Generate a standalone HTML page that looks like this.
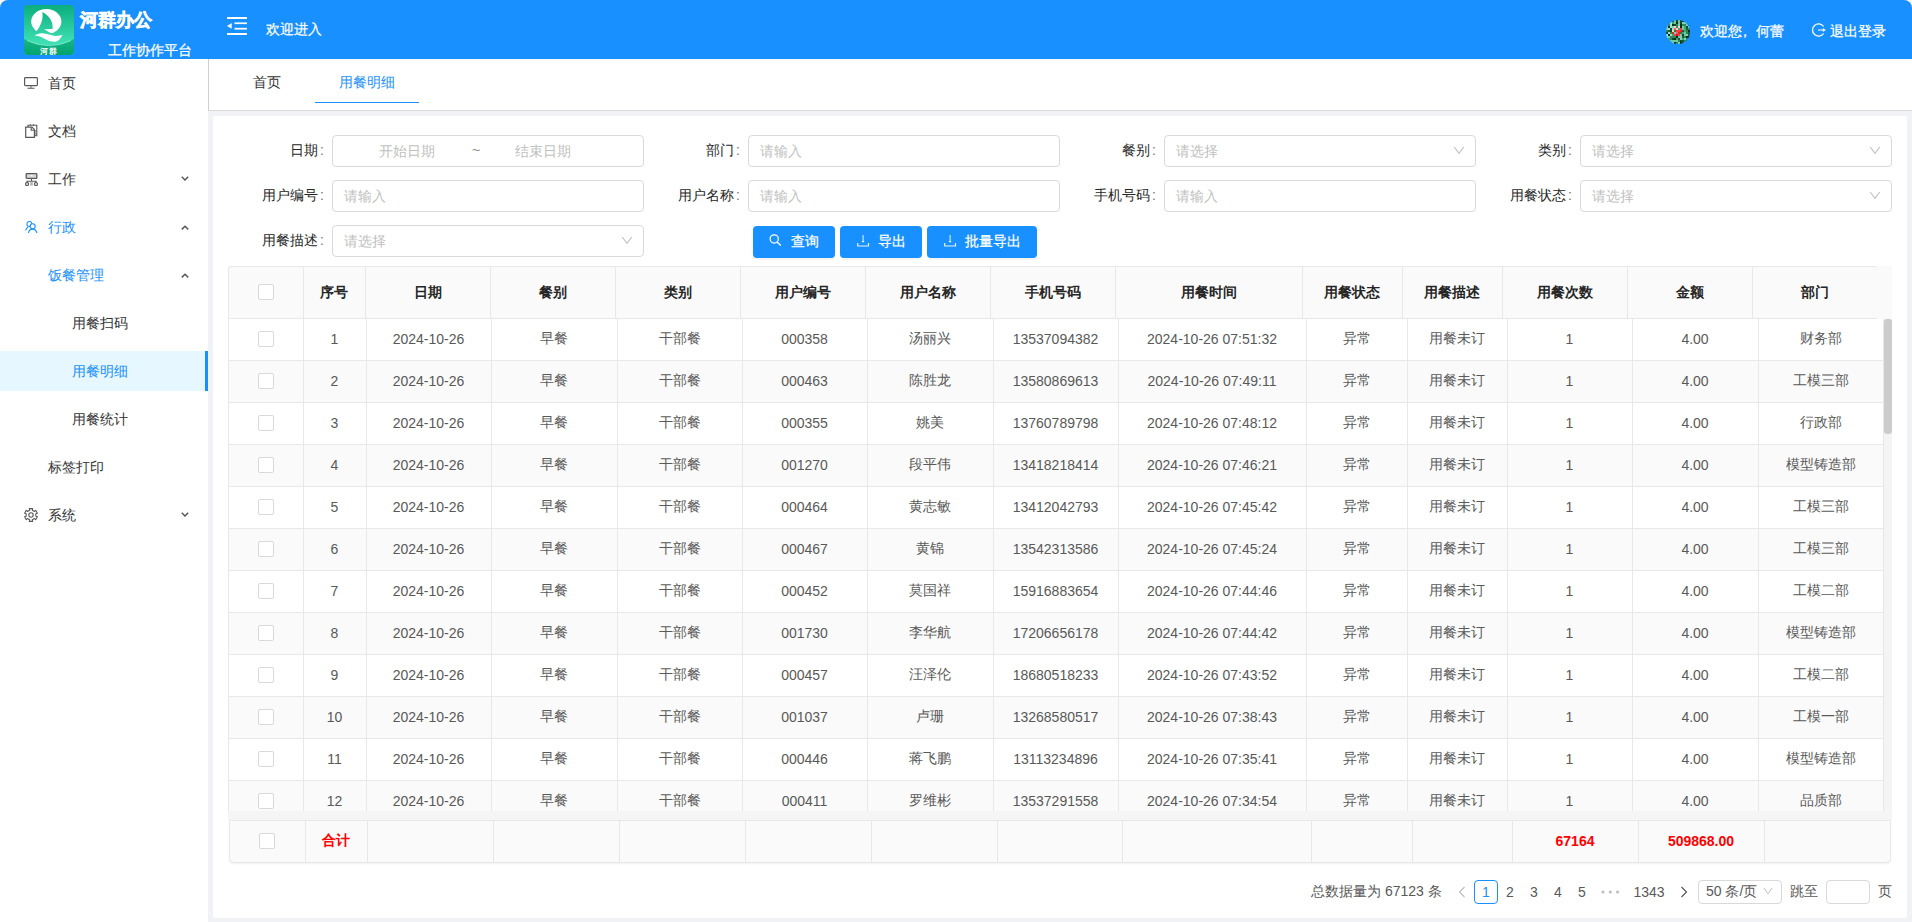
<!DOCTYPE html><html><head><meta charset="utf-8"><title>用餐明细</title><style>
html,body{margin:0;padding:0;width:1912px;height:922px;overflow:hidden;background:#fbf6ef;}
body{font-family:"Liberation Sans", sans-serif;font-size:14px;position:relative;color:#595959;}
div{box-sizing:border-box;}
svg{display:block;}
</style></head><body>
<div style="position:absolute;left:0px;top:20px;width:208px;height:902px;background:#fff;"></div>
<div style="position:absolute;left:208px;top:58px;width:1704px;height:864px;background:#f0f2f5;"></div>
<div style="position:absolute;left:0px;top:0px;width:1912px;height:59px;background:#1890ff;border-radius:8px 8px 0 0;"></div>
<svg style="position:absolute;left:24px;top:5px;" width="50" height="50" viewBox="0 0 50 50">
<defs><linearGradient id="lg" gradientUnits="userSpaceOnUse" x1="0" y1="0" x2="0" y2="38">
<stop offset="0" stop-color="#0aad7c"/><stop offset="1" stop-color="#3fe0b4"/></linearGradient>
<linearGradient id="lg2" x1="0" y1="0" x2="0" y2="1"><stop offset="0" stop-color="#16b887"/><stop offset="1" stop-color="#03a26f"/></linearGradient></defs>
<rect x="0" y="0" width="50" height="50" rx="4" fill="url(#lg)"/>
<path d="M0 34 Q25 47 50 34 V46 A4 4 0 0 1 46 50 H4 A4 4 0 0 1 0 46 Z" fill="url(#lg2)"/>
<path d="M3 35.5 Q25 46 47 35.5" stroke="#bff5e2" stroke-width="0.7" fill="none" opacity="0.8"/>
<ellipse cx="22.3" cy="16.6" rx="15.1" ry="12.5" fill="#fff"/>
<path d="M18.4 7 C24 10 29.5 16 28.6 23.9 L20.1 24.3 C23 26 26 28.2 29.7 28.9 C32 29 34.5 27.5 36.6 25 L38 31 L8 31 L10.8 28.3 C15.5 23 19.6 16 18.4 7 Z" fill="url(#lg)"/>
<path d="M10.8 30.4 C13 29 15.5 28 18 28.2 C21 28.4 23.5 29 25.4 29.6 C28 30.6 30 31 32 30.9 C34.5 30.8 36.8 30.6 38.4 30.1 C37 33 35.5 35 33.5 35.9 C31.5 36.8 29.5 36.9 28 36.6 C25.5 36.2 23.5 35.5 21 34 C18.5 32.5 15 30.6 10.8 30.4 Z" fill="#fff"/>
<text x="25" y="48.6" font-size="7.5" font-weight="bold" fill="#fff" text-anchor="middle" letter-spacing="1" font-family="Liberation Sans, sans-serif">河群</text>
</svg>
<div style="position:absolute;left:80px;top:8px;width:100px;height:24px;display:flex;align-items:center;justify-content:flex-start;white-space:nowrap;color:#fff;font-size:18px;font-weight:700;-webkit-text-stroke:0.6px #fff;">河群办公</div>
<div style="position:absolute;left:108px;top:41px;width:100px;height:20px;display:flex;align-items:center;justify-content:flex-start;white-space:nowrap;color:#fff;font-size:14px;-webkit-text-stroke:0.25px #fff;">工作协作平台</div>
<svg style="position:absolute;left:227px;top:17px;" width="20" height="18" viewBox="0 0 20 18">
<rect x="0" y="0" width="20" height="2" fill="#fff"/>
<rect x="7.5" y="5.4" width="12.5" height="1.7" fill="#fff"/>
<rect x="7.5" y="10.8" width="12.5" height="1.8" fill="#fff"/>
<rect x="0" y="16" width="20" height="2" fill="#fff"/>
<path d="M0 8.9 L4.7 6 L4.7 11.8 Z" fill="#fff"/>
</svg>
<div style="position:absolute;left:266px;top:20px;width:80px;height:20px;display:flex;align-items:center;justify-content:flex-start;white-space:nowrap;color:#fff;font-size:14px;-webkit-text-stroke:0.25px #fff;">欢迎进入</div>
<svg style="position:absolute;left:1666px;top:20px;" width="24" height="24" viewBox="0 0 24 24"><defs><clipPath id="avc"><circle cx="12" cy="12" r="12"/></clipPath></defs><g clip-path="url(#avc)"><rect x="0" y="0" width="2" height="2" fill="#3fa57a"/><rect x="2" y="0" width="2" height="2" fill="#1f5a35"/><rect x="4" y="0" width="2" height="2" fill="#0d2e1a"/><rect x="6" y="0" width="2" height="2" fill="#1f5a35"/><rect x="8" y="0" width="2" height="2" fill="#6cc8a8"/><rect x="10" y="0" width="2" height="2" fill="#154a2a"/><rect x="12" y="0" width="2" height="2" fill="#6cc8a8"/><rect x="14" y="0" width="2" height="2" fill="#154a2a"/><rect x="16" y="0" width="2" height="2" fill="#0d2e1a"/><rect x="18" y="0" width="2" height="2" fill="#1f5a35"/><rect x="20" y="0" width="2" height="2" fill="#154a2a"/><rect x="22" y="0" width="2" height="2" fill="#6cc8a8"/><rect x="0" y="2" width="2" height="2" fill="#3fa57a"/><rect x="2" y="2" width="2" height="2" fill="#3fa57a"/><rect x="4" y="2" width="2" height="2" fill="#9fe0cc"/><rect x="6" y="2" width="2" height="2" fill="#3fa57a"/><rect x="8" y="2" width="2" height="2" fill="#6cc8a8"/><rect x="10" y="2" width="2" height="2" fill="#0d2e1a"/><rect x="12" y="2" width="2" height="2" fill="#6cc8a8"/><rect x="14" y="2" width="2" height="2" fill="#154a2a"/><rect x="16" y="2" width="2" height="2" fill="#7ed0b8"/><rect x="18" y="2" width="2" height="2" fill="#7ed0b8"/><rect x="20" y="2" width="2" height="2" fill="#6cc8a8"/><rect x="22" y="2" width="2" height="2" fill="#6cc8a8"/><rect x="0" y="4" width="2" height="2" fill="#9fe0cc"/><rect x="2" y="4" width="2" height="2" fill="#2b8a5a"/><rect x="4" y="4" width="2" height="2" fill="#9fe0cc"/><rect x="6" y="4" width="2" height="2" fill="#0d2e1a"/><rect x="8" y="4" width="2" height="2" fill="#154a2a"/><rect x="10" y="4" width="2" height="2" fill="#2b8a5a"/><rect x="12" y="4" width="2" height="2" fill="#7ed0b8"/><rect x="14" y="4" width="2" height="2" fill="#0d2e1a"/><rect x="16" y="4" width="2" height="2" fill="#2b8a5a"/><rect x="18" y="4" width="2" height="2" fill="#2b8a5a"/><rect x="20" y="4" width="2" height="2" fill="#7ed0b8"/><rect x="22" y="4" width="2" height="2" fill="#0d2e1a"/><rect x="0" y="6" width="2" height="2" fill="#7ed0b8"/><rect x="2" y="6" width="2" height="2" fill="#0d2e1a"/><rect x="4" y="6" width="2" height="2" fill="#9fe0cc"/><rect x="6" y="6" width="2" height="2" fill="#7ed0b8"/><rect x="8" y="6" width="2" height="2" fill="#ffd0c8"/><rect x="10" y="6" width="2" height="2" fill="#2b8a5a"/><rect x="12" y="6" width="2" height="2" fill="#ffd0c8"/><rect x="14" y="6" width="2" height="2" fill="#0d2e1a"/><rect x="16" y="6" width="2" height="2" fill="#6cc8a8"/><rect x="18" y="6" width="2" height="2" fill="#3fa57a"/><rect x="20" y="6" width="2" height="2" fill="#154a2a"/><rect x="22" y="6" width="2" height="2" fill="#7ed0b8"/><rect x="0" y="8" width="2" height="2" fill="#7ed0b8"/><rect x="2" y="8" width="2" height="2" fill="#9fe0cc"/><rect x="4" y="8" width="2" height="2" fill="#154a2a"/><rect x="6" y="8" width="2" height="2" fill="#9fe0cc"/><rect x="8" y="8" width="2" height="2" fill="#f06060"/><rect x="10" y="8" width="2" height="2" fill="#ffd0c8"/><rect x="12" y="8" width="2" height="2" fill="#3fa57a"/><rect x="14" y="8" width="2" height="2" fill="#ff3b3b"/><rect x="16" y="8" width="2" height="2" fill="#6cc8a8"/><rect x="18" y="8" width="2" height="2" fill="#3fa57a"/><rect x="20" y="8" width="2" height="2" fill="#1f5a35"/><rect x="22" y="8" width="2" height="2" fill="#2b8a5a"/><rect x="0" y="10" width="2" height="2" fill="#2b8a5a"/><rect x="2" y="10" width="2" height="2" fill="#1f5a35"/><rect x="4" y="10" width="2" height="2" fill="#154a2a"/><rect x="6" y="10" width="2" height="2" fill="#ffd0c8"/><rect x="8" y="10" width="2" height="2" fill="#2d7a3a"/><rect x="10" y="10" width="2" height="2" fill="#ff3b3b"/><rect x="12" y="10" width="2" height="2" fill="#ff3b3b"/><rect x="14" y="10" width="2" height="2" fill="#e8222a"/><rect x="16" y="10" width="2" height="2" fill="#1f5a35"/><rect x="18" y="10" width="2" height="2" fill="#3fa57a"/><rect x="20" y="10" width="2" height="2" fill="#2b8a5a"/><rect x="22" y="10" width="2" height="2" fill="#0d2e1a"/><rect x="0" y="12" width="2" height="2" fill="#154a2a"/><rect x="2" y="12" width="2" height="2" fill="#9fe0cc"/><rect x="4" y="12" width="2" height="2" fill="#2b8a5a"/><rect x="6" y="12" width="2" height="2" fill="#e8222a"/><rect x="8" y="12" width="2" height="2" fill="#7ed0b8"/><rect x="10" y="12" width="2" height="2" fill="#f06060"/><rect x="12" y="12" width="2" height="2" fill="#e8222a"/><rect x="14" y="12" width="2" height="2" fill="#2d7a3a"/><rect x="16" y="12" width="2" height="2" fill="#3fa57a"/><rect x="18" y="12" width="2" height="2" fill="#6cc8a8"/><rect x="20" y="12" width="2" height="2" fill="#2b8a5a"/><rect x="22" y="12" width="2" height="2" fill="#1f5a35"/><rect x="0" y="14" width="2" height="2" fill="#9fe0cc"/><rect x="2" y="14" width="2" height="2" fill="#0d2e1a"/><rect x="4" y="14" width="2" height="2" fill="#9fe0cc"/><rect x="6" y="14" width="2" height="2" fill="#3fa57a"/><rect x="8" y="14" width="2" height="2" fill="#ff3b3b"/><rect x="10" y="14" width="2" height="2" fill="#d01820"/><rect x="12" y="14" width="2" height="2" fill="#ff3b3b"/><rect x="14" y="14" width="2" height="2" fill="#6cc8a8"/><rect x="16" y="14" width="2" height="2" fill="#154a2a"/><rect x="18" y="14" width="2" height="2" fill="#6cc8a8"/><rect x="20" y="14" width="2" height="2" fill="#7ed0b8"/><rect x="22" y="14" width="2" height="2" fill="#1f5a35"/><rect x="0" y="16" width="2" height="2" fill="#9fe0cc"/><rect x="2" y="16" width="2" height="2" fill="#6cc8a8"/><rect x="4" y="16" width="2" height="2" fill="#2b8a5a"/><rect x="6" y="16" width="2" height="2" fill="#2b8a5a"/><rect x="8" y="16" width="2" height="2" fill="#2b8a5a"/><rect x="10" y="16" width="2" height="2" fill="#0d2e1a"/><rect x="12" y="16" width="2" height="2" fill="#6cc8a8"/><rect x="14" y="16" width="2" height="2" fill="#7ed0b8"/><rect x="16" y="16" width="2" height="2" fill="#1f5a35"/><rect x="18" y="16" width="2" height="2" fill="#2b8a5a"/><rect x="20" y="16" width="2" height="2" fill="#0d2e1a"/><rect x="22" y="16" width="2" height="2" fill="#0d2e1a"/><rect x="0" y="18" width="2" height="2" fill="#6cc8a8"/><rect x="2" y="18" width="2" height="2" fill="#3fa57a"/><rect x="4" y="18" width="2" height="2" fill="#2b8a5a"/><rect x="6" y="18" width="2" height="2" fill="#154a2a"/><rect x="8" y="18" width="2" height="2" fill="#0d2e1a"/><rect x="10" y="18" width="2" height="2" fill="#3fa57a"/><rect x="12" y="18" width="2" height="2" fill="#1f5a35"/><rect x="14" y="18" width="2" height="2" fill="#7ed0b8"/><rect x="16" y="18" width="2" height="2" fill="#3fa57a"/><rect x="18" y="18" width="2" height="2" fill="#7ed0b8"/><rect x="20" y="18" width="2" height="2" fill="#2b8a5a"/><rect x="22" y="18" width="2" height="2" fill="#3fa57a"/><rect x="0" y="20" width="2" height="2" fill="#0d2e1a"/><rect x="2" y="20" width="2" height="2" fill="#3fa57a"/><rect x="4" y="20" width="2" height="2" fill="#6cc8a8"/><rect x="6" y="20" width="2" height="2" fill="#6cc8a8"/><rect x="8" y="20" width="2" height="2" fill="#6cc8a8"/><rect x="10" y="20" width="2" height="2" fill="#6cc8a8"/><rect x="12" y="20" width="2" height="2" fill="#2b8a5a"/><rect x="14" y="20" width="2" height="2" fill="#154a2a"/><rect x="16" y="20" width="2" height="2" fill="#1f5a35"/><rect x="18" y="20" width="2" height="2" fill="#2b8a5a"/><rect x="20" y="20" width="2" height="2" fill="#154a2a"/><rect x="22" y="20" width="2" height="2" fill="#3fa57a"/><rect x="0" y="22" width="2" height="2" fill="#1f5a35"/><rect x="2" y="22" width="2" height="2" fill="#3fa57a"/><rect x="4" y="22" width="2" height="2" fill="#3fa57a"/><rect x="6" y="22" width="2" height="2" fill="#7ed0b8"/><rect x="8" y="22" width="2" height="2" fill="#0d2e1a"/><rect x="10" y="22" width="2" height="2" fill="#2b8a5a"/><rect x="12" y="22" width="2" height="2" fill="#7ed0b8"/><rect x="14" y="22" width="2" height="2" fill="#0d2e1a"/><rect x="16" y="22" width="2" height="2" fill="#1f5a35"/><rect x="18" y="22" width="2" height="2" fill="#9fe0cc"/><rect x="20" y="22" width="2" height="2" fill="#0d2e1a"/><rect x="22" y="22" width="2" height="2" fill="#1f5a35"/></g></svg>
<div style="position:absolute;left:1700px;top:21.5px;width:90px;height:20px;display:flex;align-items:center;justify-content:flex-start;white-space:nowrap;color:#fff;font-size:14px;-webkit-text-stroke:0.25px #fff;">欢迎您<span style="position:relative;left:-4px;">，</span>何蕾</div>
<svg style="position:absolute;left:1811px;top:23px;" width="15" height="15" viewBox="0 0 15 15">
<path d="M12.6 3.5 A6.1 6.1 0 1 0 12.6 10.5" stroke="#fff" stroke-width="1.3" fill="none"/>
<path d="M7 7 H12.4" stroke="#fff" stroke-width="1.3" opacity="0.8"/><path d="M11.8 4.9 L14.8 7 L11.8 9.1 Z" fill="#fff"/>
</svg>
<div style="position:absolute;left:1830px;top:21.5px;width:70px;height:20px;display:flex;align-items:center;justify-content:flex-start;white-space:nowrap;color:#fff;font-size:14px;-webkit-text-stroke:0.25px #fff;">退出登录</div>
<svg style="position:absolute;left:24px;top:77px;" width="14" height="13" viewBox="0 0 14 13"><rect x="0.6" y="0.6" width="12.8" height="8" rx="0.8" stroke="#595959" stroke-width="1.2" fill="none"/><path d="M7 8.7 V11" stroke="#595959" stroke-width="1.2" opacity="0.7"/><path d="M3.5 11.3 H10.5" stroke="#595959" stroke-width="1.2" opacity="0.85"/></svg>
<div style="position:absolute;left:48px;top:74px;width:100px;height:20px;display:flex;align-items:center;justify-content:flex-start;white-space:nowrap;color:#333333;">首页</div>
<svg style="position:absolute;left:25px;top:124px;" width="13" height="14" viewBox="0 0 13 14"><rect x="9.1" y="6" width="2.6" height="5.6" fill="#a8a8a8"/><path d="M3 3 V1.3 H11.8 V11.8 H9.4" stroke="#595959" stroke-width="1.1" fill="none"/><path d="M5.4 0 V1.3 M8.5 0 V1.3" stroke="#595959" stroke-width="0.9"/><path d="M0.7 3.1 H7 L9.4 5.5 V13.4 H0.7 Z" stroke="#595959" stroke-width="1.2" fill="#fff"/><path d="M6.2 3.3 V6.3 H9.3" stroke="#595959" stroke-width="1.1" fill="none"/></svg>
<div style="position:absolute;left:48px;top:122px;width:100px;height:20px;display:flex;align-items:center;justify-content:flex-start;white-space:nowrap;color:#333333;">文档</div>
<svg style="position:absolute;left:25px;top:172.5px;" width="13" height="13" viewBox="0 0 13 13"><rect x="1.2" y="0.7" width="10.6" height="4.6" rx="0.6" stroke="#595959" stroke-width="1.3" fill="#d9d9d9"/><path d="M5.5 2.6 H7.5" stroke="#fff" stroke-width="1"/><path d="M6.5 5.3 V8.3 M2 10 V8.3 H11 V10" stroke="#595959" stroke-width="1.1" fill="none"/><rect x="0.6" y="9.6" width="2.9" height="2.8" rx="1" stroke="#595959" stroke-width="1.1" fill="none"/><rect x="9.5" y="9.6" width="2.9" height="2.8" rx="1" stroke="#595959" stroke-width="1.1" fill="none"/><rect x="5.1" y="9.2" width="2.8" height="3.4" fill="#595959" opacity="0.45"/></svg>
<div style="position:absolute;left:48px;top:170px;width:100px;height:20px;display:flex;align-items:center;justify-content:flex-start;white-space:nowrap;color:#333333;">工作</div>
<svg style="position:absolute;left:181px;top:176px;" width="8" height="5" viewBox="0 0 8 5"><path d="M0.8 0.8 L4 4 L7.2 0.8" stroke="#595959" stroke-width="1.5" fill="none"/></svg>
<svg style="position:absolute;left:25px;top:221px;" width="14" height="14" viewBox="0 0 14 14"><circle cx="4.4" cy="3" r="2.5" stroke="#1890ff" stroke-width="1.1" fill="none"/><path d="M0.6 9.3 C1 7.6 1.9 6.5 3.2 5.9" stroke="#1890ff" stroke-width="1.1" fill="none"/><circle cx="7.7" cy="5.3" r="2.5" stroke="#1890ff" stroke-width="1.1" fill="#fff"/><path d="M3.4 12 C3.9 9.6 5.6 8.1 7.6 8.1 C9.6 8.1 11.3 9.6 11.9 12" stroke="#1890ff" stroke-width="1.1" fill="none"/></svg>
<div style="position:absolute;left:48px;top:218px;width:100px;height:20px;display:flex;align-items:center;justify-content:flex-start;white-space:nowrap;color:#1890ff;">行政</div>
<svg style="position:absolute;left:181px;top:225px;" width="8" height="5" viewBox="0 0 8 5"><path d="M0.8 4.4 L4 1.2 L7.2 4.4" stroke="#595959" stroke-width="1.5" fill="none"/></svg>
<div style="position:absolute;left:48px;top:266px;width:100px;height:20px;display:flex;align-items:center;justify-content:flex-start;white-space:nowrap;color:#1890ff;">饭餐管理</div>
<svg style="position:absolute;left:181px;top:273px;" width="8" height="5" viewBox="0 0 8 5"><path d="M0.8 4.4 L4 1.2 L7.2 4.4" stroke="#595959" stroke-width="1.5" fill="none"/></svg>
<div style="position:absolute;left:72px;top:314px;width:100px;height:20px;display:flex;align-items:center;justify-content:flex-start;white-space:nowrap;color:#333333;">用餐扫码</div>
<div style="position:absolute;left:0px;top:351px;width:208px;height:40px;background:#e6f7ff;"></div>
<div style="position:absolute;left:205px;top:351px;width:3px;height:40px;background:#1890ff;"></div>
<div style="position:absolute;left:72px;top:362px;width:100px;height:20px;display:flex;align-items:center;justify-content:flex-start;white-space:nowrap;color:#1890ff;">用餐明细</div>
<div style="position:absolute;left:72px;top:410px;width:100px;height:20px;display:flex;align-items:center;justify-content:flex-start;white-space:nowrap;color:#333333;">用餐统计</div>
<div style="position:absolute;left:48px;top:458px;width:100px;height:20px;display:flex;align-items:center;justify-content:flex-start;white-space:nowrap;color:#333333;">标签打印</div>
<svg style="position:absolute;left:24px;top:508px;" width="14" height="14" viewBox="0 0 14 14"><path d="M8.71 13.38 L5.29 13.38 L5.71 11.83 L3.46 10.54 L2.33 11.67 L0.62 8.71 L2.17 8.29 L2.17 5.71 L0.62 5.29 L2.33 2.33 L3.46 3.46 L5.71 2.17 L5.29 0.62 L8.71 0.62 L8.29 2.17 L10.54 3.46 L11.67 2.33 L13.38 5.29 L11.83 5.71 L11.83 8.29 L13.38 8.71 L11.67 11.67 L10.54 10.54 L8.29 11.83 Z" stroke="#595959" stroke-width="1.1" fill="none" stroke-linejoin="round"/><circle cx="7" cy="7" r="2.2" stroke="#595959" stroke-width="1.1" fill="none"/></svg>
<div style="position:absolute;left:48px;top:506px;width:100px;height:20px;display:flex;align-items:center;justify-content:flex-start;white-space:nowrap;color:#333333;">系统</div>
<svg style="position:absolute;left:181px;top:512px;" width="8" height="5" viewBox="0 0 8 5"><path d="M0.8 0.8 L4 4 L7.2 0.8" stroke="#595959" stroke-width="1.5" fill="none"/></svg>
<div style="position:absolute;left:208px;top:59px;width:1704px;height:52px;background:#fff;border-left:1px solid #d0d0d0;border-bottom:1px solid #d9d9d9;"></div>
<div style="position:absolute;left:240px;top:73px;width:54px;height:20px;display:flex;align-items:center;justify-content:center;white-space:nowrap;color:#333333;">首页</div>
<div style="position:absolute;left:315px;top:73px;width:104px;height:20px;display:flex;align-items:center;justify-content:center;white-space:nowrap;color:#1890ff;">用餐明细</div>
<div style="position:absolute;left:315px;top:101.7px;width:104px;height:1.5px;background:#1890ff;"></div>
<div style="position:absolute;left:209px;top:59px;width:1703px;height:4px;background:linear-gradient(rgba(0,0,0,0.035),rgba(0,0,0,0));"></div>
<div style="position:absolute;left:213px;top:116px;width:1694px;height:802px;background:#fff;border-radius:2px;"></div>
<div style="position:absolute;left:124px;top:135px;width:200px;height:32px;display:flex;align-items:center;justify-content:flex-end;white-space:nowrap;color:#262626;">日期<span style="margin-left:2px;color:#777;position:relative;top:-1px;">:</span></div>
<div style="position:absolute;left:332px;top:135px;width:312px;height:32px;border:1px solid #d9d9d9;border-radius:4px;background:#fff;"></div>
<div style="position:absolute;left:352px;top:136px;width:110px;height:32px;display:flex;align-items:center;justify-content:center;white-space:nowrap;color:#bfbfbf;">开始日期</div>
<div style="position:absolute;left:466px;top:134px;width:20px;height:32px;display:flex;align-items:center;justify-content:center;white-space:nowrap;color:#8c8c8c;">~</div>
<div style="position:absolute;left:488px;top:136px;width:110px;height:32px;display:flex;align-items:center;justify-content:center;white-space:nowrap;color:#bfbfbf;">结束日期</div>
<div style="position:absolute;left:540px;top:135px;width:200px;height:32px;display:flex;align-items:center;justify-content:flex-end;white-space:nowrap;color:#262626;">部门<span style="margin-left:2px;color:#777;position:relative;top:-1px;">:</span></div>
<div style="position:absolute;left:748px;top:135px;width:312px;height:32px;border:1px solid #d9d9d9;border-radius:4px;background:#fff;"></div>
<div style="position:absolute;left:760px;top:136px;width:200px;height:32px;display:flex;align-items:center;justify-content:flex-start;white-space:nowrap;color:#bfbfbf;">请输入</div>
<div style="position:absolute;left:956px;top:135px;width:200px;height:32px;display:flex;align-items:center;justify-content:flex-end;white-space:nowrap;color:#262626;">餐别<span style="margin-left:2px;color:#777;position:relative;top:-1px;">:</span></div>
<div style="position:absolute;left:1164px;top:135px;width:312px;height:32px;border:1px solid #d9d9d9;border-radius:4px;background:#fff;"></div>
<div style="position:absolute;left:1176px;top:136px;width:200px;height:32px;display:flex;align-items:center;justify-content:flex-start;white-space:nowrap;color:#bfbfbf;">请选择</div>
<svg style="position:absolute;left:1453px;top:146px;" width="12" height="9" viewBox="0 0 12 9"><path d="M1.2 1 L6 7.4 L10.8 1" stroke="#bfbfbf" stroke-width="1.1" fill="none"/></svg>
<div style="position:absolute;left:1372px;top:135px;width:200px;height:32px;display:flex;align-items:center;justify-content:flex-end;white-space:nowrap;color:#262626;">类别<span style="margin-left:2px;color:#777;position:relative;top:-1px;">:</span></div>
<div style="position:absolute;left:1580px;top:135px;width:312px;height:32px;border:1px solid #d9d9d9;border-radius:4px;background:#fff;"></div>
<div style="position:absolute;left:1592px;top:136px;width:200px;height:32px;display:flex;align-items:center;justify-content:flex-start;white-space:nowrap;color:#bfbfbf;">请选择</div>
<svg style="position:absolute;left:1869px;top:146px;" width="12" height="9" viewBox="0 0 12 9"><path d="M1.2 1 L6 7.4 L10.8 1" stroke="#bfbfbf" stroke-width="1.1" fill="none"/></svg>
<div style="position:absolute;left:124px;top:180px;width:200px;height:32px;display:flex;align-items:center;justify-content:flex-end;white-space:nowrap;color:#262626;">用户编号<span style="margin-left:2px;color:#777;position:relative;top:-1px;">:</span></div>
<div style="position:absolute;left:332px;top:180px;width:312px;height:32px;border:1px solid #d9d9d9;border-radius:4px;background:#fff;"></div>
<div style="position:absolute;left:344px;top:181px;width:200px;height:32px;display:flex;align-items:center;justify-content:flex-start;white-space:nowrap;color:#bfbfbf;">请输入</div>
<div style="position:absolute;left:540px;top:180px;width:200px;height:32px;display:flex;align-items:center;justify-content:flex-end;white-space:nowrap;color:#262626;">用户名称<span style="margin-left:2px;color:#777;position:relative;top:-1px;">:</span></div>
<div style="position:absolute;left:748px;top:180px;width:312px;height:32px;border:1px solid #d9d9d9;border-radius:4px;background:#fff;"></div>
<div style="position:absolute;left:760px;top:181px;width:200px;height:32px;display:flex;align-items:center;justify-content:flex-start;white-space:nowrap;color:#bfbfbf;">请输入</div>
<div style="position:absolute;left:956px;top:180px;width:200px;height:32px;display:flex;align-items:center;justify-content:flex-end;white-space:nowrap;color:#262626;">手机号码<span style="margin-left:2px;color:#777;position:relative;top:-1px;">:</span></div>
<div style="position:absolute;left:1164px;top:180px;width:312px;height:32px;border:1px solid #d9d9d9;border-radius:4px;background:#fff;"></div>
<div style="position:absolute;left:1176px;top:181px;width:200px;height:32px;display:flex;align-items:center;justify-content:flex-start;white-space:nowrap;color:#bfbfbf;">请输入</div>
<div style="position:absolute;left:1372px;top:180px;width:200px;height:32px;display:flex;align-items:center;justify-content:flex-end;white-space:nowrap;color:#262626;">用餐状态<span style="margin-left:2px;color:#777;position:relative;top:-1px;">:</span></div>
<div style="position:absolute;left:1580px;top:180px;width:312px;height:32px;border:1px solid #d9d9d9;border-radius:4px;background:#fff;"></div>
<div style="position:absolute;left:1592px;top:181px;width:200px;height:32px;display:flex;align-items:center;justify-content:flex-start;white-space:nowrap;color:#bfbfbf;">请选择</div>
<svg style="position:absolute;left:1869px;top:191px;" width="12" height="9" viewBox="0 0 12 9"><path d="M1.2 1 L6 7.4 L10.8 1" stroke="#bfbfbf" stroke-width="1.1" fill="none"/></svg>
<div style="position:absolute;left:124px;top:225px;width:200px;height:32px;display:flex;align-items:center;justify-content:flex-end;white-space:nowrap;color:#262626;">用餐描述<span style="margin-left:2px;color:#777;position:relative;top:-1px;">:</span></div>
<div style="position:absolute;left:332px;top:225px;width:312px;height:32px;border:1px solid #d9d9d9;border-radius:4px;background:#fff;"></div>
<div style="position:absolute;left:344px;top:226px;width:200px;height:32px;display:flex;align-items:center;justify-content:flex-start;white-space:nowrap;color:#bfbfbf;">请选择</div>
<svg style="position:absolute;left:621px;top:236px;" width="12" height="9" viewBox="0 0 12 9"><path d="M1.2 1 L6 7.4 L10.8 1" stroke="#bfbfbf" stroke-width="1.1" fill="none"/></svg>
<div style="position:absolute;left:753px;top:226px;width:82px;height:32px;background:#1890ff;border-radius:4px;box-shadow:0 2px 0 rgba(0,0,0,0.045);"></div>
<svg style="position:absolute;left:769px;top:234px;" width="13" height="13" viewBox="0 0 13 13"><circle cx="5.2" cy="4.9" r="4.1" stroke="#fff" stroke-width="1.25" fill="none"/><path d="M8.1 7.9 L11.8 11.6" stroke="#fff" stroke-width="1.35"/></svg>
<div style="position:absolute;left:791px;top:226px;width:120px;height:32px;display:flex;align-items:center;justify-content:flex-start;white-space:nowrap;color:#fff;-webkit-text-stroke:0.25px #fff;">查询</div>
<div style="position:absolute;left:840px;top:226px;width:82px;height:32px;background:#1890ff;border-radius:4px;box-shadow:0 2px 0 rgba(0,0,0,0.045);"></div>
<svg style="position:absolute;left:857px;top:234px;" width="13" height="13" viewBox="0 0 13 13"><path d="M6.1 1 V7.6" stroke="#fff" stroke-width="1.1" opacity="0.85"/><path d="M4.7 7 H7.5 L6.1 8.8 Z" fill="#fff"/><path d="M0.7 9 V12 H11.5 V9" stroke="#fff" stroke-width="1.2" fill="none" opacity="0.9"/></svg>
<div style="position:absolute;left:878px;top:226px;width:120px;height:32px;display:flex;align-items:center;justify-content:flex-start;white-space:nowrap;color:#fff;-webkit-text-stroke:0.25px #fff;">导出</div>
<div style="position:absolute;left:927px;top:226px;width:110px;height:32px;background:#1890ff;border-radius:4px;box-shadow:0 2px 0 rgba(0,0,0,0.045);"></div>
<svg style="position:absolute;left:944px;top:234px;" width="13" height="13" viewBox="0 0 13 13"><path d="M6.1 1 V7.6" stroke="#fff" stroke-width="1.1" opacity="0.85"/><path d="M4.7 7 H7.5 L6.1 8.8 Z" fill="#fff"/><path d="M0.7 9 V12 H11.5 V9" stroke="#fff" stroke-width="1.2" fill="none" opacity="0.9"/></svg>
<div style="position:absolute;left:965px;top:226px;width:120px;height:32px;display:flex;align-items:center;justify-content:flex-start;white-space:nowrap;color:#fff;-webkit-text-stroke:0.25px #fff;">批量导出</div>
<div style="position:absolute;left:228px;top:266px;width:1664px;height:53px;background:#fafafa;"></div>
<div style="position:absolute;left:228px;top:266px;width:1649px;height:53px;border-left:1px solid #e8e8e8;border-top:1px solid #e8e8e8;border-bottom:1px solid #e8e8e8;border-radius:4px 4px 0 0;"></div>
<div style="position:absolute;left:303px;top:267px;width:1px;height:51px;background:#e8e8e8;"></div>
<div style="position:absolute;left:365px;top:267px;width:1px;height:51px;background:#e8e8e8;"></div>
<div style="position:absolute;left:490px;top:267px;width:1px;height:51px;background:#e8e8e8;"></div>
<div style="position:absolute;left:615px;top:267px;width:1px;height:51px;background:#e8e8e8;"></div>
<div style="position:absolute;left:740px;top:267px;width:1px;height:51px;background:#e8e8e8;"></div>
<div style="position:absolute;left:865px;top:267px;width:1px;height:51px;background:#e8e8e8;"></div>
<div style="position:absolute;left:990px;top:267px;width:1px;height:51px;background:#e8e8e8;"></div>
<div style="position:absolute;left:1115px;top:267px;width:1px;height:51px;background:#e8e8e8;"></div>
<div style="position:absolute;left:1302px;top:267px;width:1px;height:51px;background:#e8e8e8;"></div>
<div style="position:absolute;left:1402px;top:267px;width:1px;height:51px;background:#e8e8e8;"></div>
<div style="position:absolute;left:1502px;top:267px;width:1px;height:51px;background:#e8e8e8;"></div>
<div style="position:absolute;left:1627px;top:267px;width:1px;height:51px;background:#e8e8e8;"></div>
<div style="position:absolute;left:1752px;top:267px;width:1px;height:51px;background:#e8e8e8;"></div>
<div style="position:absolute;left:258px;top:284px;width:16px;height:16px;border:1px solid #d9d9d9;border-radius:2px;background:#fff;"></div>
<div style="position:absolute;left:303px;top:267px;width:62px;height:51px;display:flex;align-items:center;justify-content:center;white-space:nowrap;color:#262626;font-weight:bold;">序号</div>
<div style="position:absolute;left:365px;top:267px;width:125px;height:51px;display:flex;align-items:center;justify-content:center;white-space:nowrap;color:#262626;font-weight:bold;">日期</div>
<div style="position:absolute;left:490px;top:267px;width:125px;height:51px;display:flex;align-items:center;justify-content:center;white-space:nowrap;color:#262626;font-weight:bold;">餐别</div>
<div style="position:absolute;left:615px;top:267px;width:125px;height:51px;display:flex;align-items:center;justify-content:center;white-space:nowrap;color:#262626;font-weight:bold;">类别</div>
<div style="position:absolute;left:740px;top:267px;width:125px;height:51px;display:flex;align-items:center;justify-content:center;white-space:nowrap;color:#262626;font-weight:bold;">用户编号</div>
<div style="position:absolute;left:865px;top:267px;width:125px;height:51px;display:flex;align-items:center;justify-content:center;white-space:nowrap;color:#262626;font-weight:bold;">用户名称</div>
<div style="position:absolute;left:990px;top:267px;width:125px;height:51px;display:flex;align-items:center;justify-content:center;white-space:nowrap;color:#262626;font-weight:bold;">手机号码</div>
<div style="position:absolute;left:1115px;top:267px;width:187px;height:51px;display:flex;align-items:center;justify-content:center;white-space:nowrap;color:#262626;font-weight:bold;">用餐时间</div>
<div style="position:absolute;left:1302px;top:267px;width:100px;height:51px;display:flex;align-items:center;justify-content:center;white-space:nowrap;color:#262626;font-weight:bold;">用餐状态</div>
<div style="position:absolute;left:1402px;top:267px;width:100px;height:51px;display:flex;align-items:center;justify-content:center;white-space:nowrap;color:#262626;font-weight:bold;">用餐描述</div>
<div style="position:absolute;left:1502px;top:267px;width:125px;height:51px;display:flex;align-items:center;justify-content:center;white-space:nowrap;color:#262626;font-weight:bold;">用餐次数</div>
<div style="position:absolute;left:1627px;top:267px;width:125px;height:51px;display:flex;align-items:center;justify-content:center;white-space:nowrap;color:#262626;font-weight:bold;">金额</div>
<div style="position:absolute;left:1752px;top:267px;width:125px;height:51px;display:flex;align-items:center;justify-content:center;white-space:nowrap;color:#262626;font-weight:bold;">部门</div>
<div style="position:absolute;left:0;top:319px;width:1912px;height:492px;overflow:hidden;">
<div style="position:absolute;left:228px;top:0px;width:1656px;height:42px;background:#fff;border-left:1px solid #e8e8e8;border-bottom:1px solid #e8e8e8;"></div>
<div style="position:absolute;left:303px;top:0px;width:1px;height:41px;background:#e8e8e8;"></div>
<div style="position:absolute;left:366px;top:0px;width:1px;height:41px;background:#e8e8e8;"></div>
<div style="position:absolute;left:491px;top:0px;width:1px;height:41px;background:#e8e8e8;"></div>
<div style="position:absolute;left:617px;top:0px;width:1px;height:41px;background:#e8e8e8;"></div>
<div style="position:absolute;left:742px;top:0px;width:1px;height:41px;background:#e8e8e8;"></div>
<div style="position:absolute;left:867px;top:0px;width:1px;height:41px;background:#e8e8e8;"></div>
<div style="position:absolute;left:993px;top:0px;width:1px;height:41px;background:#e8e8e8;"></div>
<div style="position:absolute;left:1118px;top:0px;width:1px;height:41px;background:#e8e8e8;"></div>
<div style="position:absolute;left:1306px;top:0px;width:1px;height:41px;background:#e8e8e8;"></div>
<div style="position:absolute;left:1407px;top:0px;width:1px;height:41px;background:#e8e8e8;"></div>
<div style="position:absolute;left:1507px;top:0px;width:1px;height:41px;background:#e8e8e8;"></div>
<div style="position:absolute;left:1632px;top:0px;width:1px;height:41px;background:#e8e8e8;"></div>
<div style="position:absolute;left:1758px;top:0px;width:1px;height:41px;background:#e8e8e8;"></div>
<div style="position:absolute;left:1883px;top:0px;width:1px;height:41px;background:#e8e8e8;"></div>
<div style="position:absolute;left:258px;top:12px;width:16px;height:16px;border:1px solid #d9d9d9;border-radius:2px;background:#fff;"></div>
<div style="position:absolute;left:303px;top:-1px;width:63px;height:41px;display:flex;align-items:center;justify-content:center;white-space:nowrap;color:#595959;">1</div>
<div style="position:absolute;left:366px;top:-1px;width:125px;height:41px;display:flex;align-items:center;justify-content:center;white-space:nowrap;color:#595959;">2024-10-26</div>
<div style="position:absolute;left:491px;top:-1px;width:126px;height:41px;display:flex;align-items:center;justify-content:center;white-space:nowrap;color:#595959;">早餐</div>
<div style="position:absolute;left:617px;top:-1px;width:125px;height:41px;display:flex;align-items:center;justify-content:center;white-space:nowrap;color:#595959;">干部餐</div>
<div style="position:absolute;left:742px;top:-1px;width:125px;height:41px;display:flex;align-items:center;justify-content:center;white-space:nowrap;color:#595959;">000358</div>
<div style="position:absolute;left:867px;top:-1px;width:126px;height:41px;display:flex;align-items:center;justify-content:center;white-space:nowrap;color:#595959;">汤丽兴</div>
<div style="position:absolute;left:993px;top:-1px;width:125px;height:41px;display:flex;align-items:center;justify-content:center;white-space:nowrap;color:#595959;">13537094382</div>
<div style="position:absolute;left:1118px;top:-1px;width:188px;height:41px;display:flex;align-items:center;justify-content:center;white-space:nowrap;color:#595959;">2024-10-26 07:51:32</div>
<div style="position:absolute;left:1306px;top:-1px;width:101px;height:41px;display:flex;align-items:center;justify-content:center;white-space:nowrap;color:#595959;">异常</div>
<div style="position:absolute;left:1407px;top:-1px;width:100px;height:41px;display:flex;align-items:center;justify-content:center;white-space:nowrap;color:#595959;">用餐未订</div>
<div style="position:absolute;left:1507px;top:-1px;width:125px;height:41px;display:flex;align-items:center;justify-content:center;white-space:nowrap;color:#595959;">1</div>
<div style="position:absolute;left:1632px;top:-1px;width:126px;height:41px;display:flex;align-items:center;justify-content:center;white-space:nowrap;color:#595959;">4.00</div>
<div style="position:absolute;left:1758px;top:-1px;width:125px;height:41px;display:flex;align-items:center;justify-content:center;white-space:nowrap;color:#595959;">财务部</div>
<div style="position:absolute;left:228px;top:42px;width:1656px;height:42px;background:#fafafa;border-left:1px solid #e8e8e8;border-bottom:1px solid #e8e8e8;"></div>
<div style="position:absolute;left:303px;top:42px;width:1px;height:41px;background:#e8e8e8;"></div>
<div style="position:absolute;left:366px;top:42px;width:1px;height:41px;background:#e8e8e8;"></div>
<div style="position:absolute;left:491px;top:42px;width:1px;height:41px;background:#e8e8e8;"></div>
<div style="position:absolute;left:617px;top:42px;width:1px;height:41px;background:#e8e8e8;"></div>
<div style="position:absolute;left:742px;top:42px;width:1px;height:41px;background:#e8e8e8;"></div>
<div style="position:absolute;left:867px;top:42px;width:1px;height:41px;background:#e8e8e8;"></div>
<div style="position:absolute;left:993px;top:42px;width:1px;height:41px;background:#e8e8e8;"></div>
<div style="position:absolute;left:1118px;top:42px;width:1px;height:41px;background:#e8e8e8;"></div>
<div style="position:absolute;left:1306px;top:42px;width:1px;height:41px;background:#e8e8e8;"></div>
<div style="position:absolute;left:1407px;top:42px;width:1px;height:41px;background:#e8e8e8;"></div>
<div style="position:absolute;left:1507px;top:42px;width:1px;height:41px;background:#e8e8e8;"></div>
<div style="position:absolute;left:1632px;top:42px;width:1px;height:41px;background:#e8e8e8;"></div>
<div style="position:absolute;left:1758px;top:42px;width:1px;height:41px;background:#e8e8e8;"></div>
<div style="position:absolute;left:1883px;top:42px;width:1px;height:41px;background:#e8e8e8;"></div>
<div style="position:absolute;left:258px;top:54px;width:16px;height:16px;border:1px solid #d9d9d9;border-radius:2px;background:#fff;"></div>
<div style="position:absolute;left:303px;top:41px;width:63px;height:41px;display:flex;align-items:center;justify-content:center;white-space:nowrap;color:#595959;">2</div>
<div style="position:absolute;left:366px;top:41px;width:125px;height:41px;display:flex;align-items:center;justify-content:center;white-space:nowrap;color:#595959;">2024-10-26</div>
<div style="position:absolute;left:491px;top:41px;width:126px;height:41px;display:flex;align-items:center;justify-content:center;white-space:nowrap;color:#595959;">早餐</div>
<div style="position:absolute;left:617px;top:41px;width:125px;height:41px;display:flex;align-items:center;justify-content:center;white-space:nowrap;color:#595959;">干部餐</div>
<div style="position:absolute;left:742px;top:41px;width:125px;height:41px;display:flex;align-items:center;justify-content:center;white-space:nowrap;color:#595959;">000463</div>
<div style="position:absolute;left:867px;top:41px;width:126px;height:41px;display:flex;align-items:center;justify-content:center;white-space:nowrap;color:#595959;">陈胜龙</div>
<div style="position:absolute;left:993px;top:41px;width:125px;height:41px;display:flex;align-items:center;justify-content:center;white-space:nowrap;color:#595959;">13580869613</div>
<div style="position:absolute;left:1118px;top:41px;width:188px;height:41px;display:flex;align-items:center;justify-content:center;white-space:nowrap;color:#595959;">2024-10-26 07:49:11</div>
<div style="position:absolute;left:1306px;top:41px;width:101px;height:41px;display:flex;align-items:center;justify-content:center;white-space:nowrap;color:#595959;">异常</div>
<div style="position:absolute;left:1407px;top:41px;width:100px;height:41px;display:flex;align-items:center;justify-content:center;white-space:nowrap;color:#595959;">用餐未订</div>
<div style="position:absolute;left:1507px;top:41px;width:125px;height:41px;display:flex;align-items:center;justify-content:center;white-space:nowrap;color:#595959;">1</div>
<div style="position:absolute;left:1632px;top:41px;width:126px;height:41px;display:flex;align-items:center;justify-content:center;white-space:nowrap;color:#595959;">4.00</div>
<div style="position:absolute;left:1758px;top:41px;width:125px;height:41px;display:flex;align-items:center;justify-content:center;white-space:nowrap;color:#595959;">工模三部</div>
<div style="position:absolute;left:228px;top:84px;width:1656px;height:42px;background:#fff;border-left:1px solid #e8e8e8;border-bottom:1px solid #e8e8e8;"></div>
<div style="position:absolute;left:303px;top:84px;width:1px;height:41px;background:#e8e8e8;"></div>
<div style="position:absolute;left:366px;top:84px;width:1px;height:41px;background:#e8e8e8;"></div>
<div style="position:absolute;left:491px;top:84px;width:1px;height:41px;background:#e8e8e8;"></div>
<div style="position:absolute;left:617px;top:84px;width:1px;height:41px;background:#e8e8e8;"></div>
<div style="position:absolute;left:742px;top:84px;width:1px;height:41px;background:#e8e8e8;"></div>
<div style="position:absolute;left:867px;top:84px;width:1px;height:41px;background:#e8e8e8;"></div>
<div style="position:absolute;left:993px;top:84px;width:1px;height:41px;background:#e8e8e8;"></div>
<div style="position:absolute;left:1118px;top:84px;width:1px;height:41px;background:#e8e8e8;"></div>
<div style="position:absolute;left:1306px;top:84px;width:1px;height:41px;background:#e8e8e8;"></div>
<div style="position:absolute;left:1407px;top:84px;width:1px;height:41px;background:#e8e8e8;"></div>
<div style="position:absolute;left:1507px;top:84px;width:1px;height:41px;background:#e8e8e8;"></div>
<div style="position:absolute;left:1632px;top:84px;width:1px;height:41px;background:#e8e8e8;"></div>
<div style="position:absolute;left:1758px;top:84px;width:1px;height:41px;background:#e8e8e8;"></div>
<div style="position:absolute;left:1883px;top:84px;width:1px;height:41px;background:#e8e8e8;"></div>
<div style="position:absolute;left:258px;top:96px;width:16px;height:16px;border:1px solid #d9d9d9;border-radius:2px;background:#fff;"></div>
<div style="position:absolute;left:303px;top:83px;width:63px;height:41px;display:flex;align-items:center;justify-content:center;white-space:nowrap;color:#595959;">3</div>
<div style="position:absolute;left:366px;top:83px;width:125px;height:41px;display:flex;align-items:center;justify-content:center;white-space:nowrap;color:#595959;">2024-10-26</div>
<div style="position:absolute;left:491px;top:83px;width:126px;height:41px;display:flex;align-items:center;justify-content:center;white-space:nowrap;color:#595959;">早餐</div>
<div style="position:absolute;left:617px;top:83px;width:125px;height:41px;display:flex;align-items:center;justify-content:center;white-space:nowrap;color:#595959;">干部餐</div>
<div style="position:absolute;left:742px;top:83px;width:125px;height:41px;display:flex;align-items:center;justify-content:center;white-space:nowrap;color:#595959;">000355</div>
<div style="position:absolute;left:867px;top:83px;width:126px;height:41px;display:flex;align-items:center;justify-content:center;white-space:nowrap;color:#595959;">姚美</div>
<div style="position:absolute;left:993px;top:83px;width:125px;height:41px;display:flex;align-items:center;justify-content:center;white-space:nowrap;color:#595959;">13760789798</div>
<div style="position:absolute;left:1118px;top:83px;width:188px;height:41px;display:flex;align-items:center;justify-content:center;white-space:nowrap;color:#595959;">2024-10-26 07:48:12</div>
<div style="position:absolute;left:1306px;top:83px;width:101px;height:41px;display:flex;align-items:center;justify-content:center;white-space:nowrap;color:#595959;">异常</div>
<div style="position:absolute;left:1407px;top:83px;width:100px;height:41px;display:flex;align-items:center;justify-content:center;white-space:nowrap;color:#595959;">用餐未订</div>
<div style="position:absolute;left:1507px;top:83px;width:125px;height:41px;display:flex;align-items:center;justify-content:center;white-space:nowrap;color:#595959;">1</div>
<div style="position:absolute;left:1632px;top:83px;width:126px;height:41px;display:flex;align-items:center;justify-content:center;white-space:nowrap;color:#595959;">4.00</div>
<div style="position:absolute;left:1758px;top:83px;width:125px;height:41px;display:flex;align-items:center;justify-content:center;white-space:nowrap;color:#595959;">行政部</div>
<div style="position:absolute;left:228px;top:126px;width:1656px;height:42px;background:#fafafa;border-left:1px solid #e8e8e8;border-bottom:1px solid #e8e8e8;"></div>
<div style="position:absolute;left:303px;top:126px;width:1px;height:41px;background:#e8e8e8;"></div>
<div style="position:absolute;left:366px;top:126px;width:1px;height:41px;background:#e8e8e8;"></div>
<div style="position:absolute;left:491px;top:126px;width:1px;height:41px;background:#e8e8e8;"></div>
<div style="position:absolute;left:617px;top:126px;width:1px;height:41px;background:#e8e8e8;"></div>
<div style="position:absolute;left:742px;top:126px;width:1px;height:41px;background:#e8e8e8;"></div>
<div style="position:absolute;left:867px;top:126px;width:1px;height:41px;background:#e8e8e8;"></div>
<div style="position:absolute;left:993px;top:126px;width:1px;height:41px;background:#e8e8e8;"></div>
<div style="position:absolute;left:1118px;top:126px;width:1px;height:41px;background:#e8e8e8;"></div>
<div style="position:absolute;left:1306px;top:126px;width:1px;height:41px;background:#e8e8e8;"></div>
<div style="position:absolute;left:1407px;top:126px;width:1px;height:41px;background:#e8e8e8;"></div>
<div style="position:absolute;left:1507px;top:126px;width:1px;height:41px;background:#e8e8e8;"></div>
<div style="position:absolute;left:1632px;top:126px;width:1px;height:41px;background:#e8e8e8;"></div>
<div style="position:absolute;left:1758px;top:126px;width:1px;height:41px;background:#e8e8e8;"></div>
<div style="position:absolute;left:1883px;top:126px;width:1px;height:41px;background:#e8e8e8;"></div>
<div style="position:absolute;left:258px;top:138px;width:16px;height:16px;border:1px solid #d9d9d9;border-radius:2px;background:#fff;"></div>
<div style="position:absolute;left:303px;top:125px;width:63px;height:41px;display:flex;align-items:center;justify-content:center;white-space:nowrap;color:#595959;">4</div>
<div style="position:absolute;left:366px;top:125px;width:125px;height:41px;display:flex;align-items:center;justify-content:center;white-space:nowrap;color:#595959;">2024-10-26</div>
<div style="position:absolute;left:491px;top:125px;width:126px;height:41px;display:flex;align-items:center;justify-content:center;white-space:nowrap;color:#595959;">早餐</div>
<div style="position:absolute;left:617px;top:125px;width:125px;height:41px;display:flex;align-items:center;justify-content:center;white-space:nowrap;color:#595959;">干部餐</div>
<div style="position:absolute;left:742px;top:125px;width:125px;height:41px;display:flex;align-items:center;justify-content:center;white-space:nowrap;color:#595959;">001270</div>
<div style="position:absolute;left:867px;top:125px;width:126px;height:41px;display:flex;align-items:center;justify-content:center;white-space:nowrap;color:#595959;">段平伟</div>
<div style="position:absolute;left:993px;top:125px;width:125px;height:41px;display:flex;align-items:center;justify-content:center;white-space:nowrap;color:#595959;">13418218414</div>
<div style="position:absolute;left:1118px;top:125px;width:188px;height:41px;display:flex;align-items:center;justify-content:center;white-space:nowrap;color:#595959;">2024-10-26 07:46:21</div>
<div style="position:absolute;left:1306px;top:125px;width:101px;height:41px;display:flex;align-items:center;justify-content:center;white-space:nowrap;color:#595959;">异常</div>
<div style="position:absolute;left:1407px;top:125px;width:100px;height:41px;display:flex;align-items:center;justify-content:center;white-space:nowrap;color:#595959;">用餐未订</div>
<div style="position:absolute;left:1507px;top:125px;width:125px;height:41px;display:flex;align-items:center;justify-content:center;white-space:nowrap;color:#595959;">1</div>
<div style="position:absolute;left:1632px;top:125px;width:126px;height:41px;display:flex;align-items:center;justify-content:center;white-space:nowrap;color:#595959;">4.00</div>
<div style="position:absolute;left:1758px;top:125px;width:125px;height:41px;display:flex;align-items:center;justify-content:center;white-space:nowrap;color:#595959;">模型铸造部</div>
<div style="position:absolute;left:228px;top:168px;width:1656px;height:42px;background:#fff;border-left:1px solid #e8e8e8;border-bottom:1px solid #e8e8e8;"></div>
<div style="position:absolute;left:303px;top:168px;width:1px;height:41px;background:#e8e8e8;"></div>
<div style="position:absolute;left:366px;top:168px;width:1px;height:41px;background:#e8e8e8;"></div>
<div style="position:absolute;left:491px;top:168px;width:1px;height:41px;background:#e8e8e8;"></div>
<div style="position:absolute;left:617px;top:168px;width:1px;height:41px;background:#e8e8e8;"></div>
<div style="position:absolute;left:742px;top:168px;width:1px;height:41px;background:#e8e8e8;"></div>
<div style="position:absolute;left:867px;top:168px;width:1px;height:41px;background:#e8e8e8;"></div>
<div style="position:absolute;left:993px;top:168px;width:1px;height:41px;background:#e8e8e8;"></div>
<div style="position:absolute;left:1118px;top:168px;width:1px;height:41px;background:#e8e8e8;"></div>
<div style="position:absolute;left:1306px;top:168px;width:1px;height:41px;background:#e8e8e8;"></div>
<div style="position:absolute;left:1407px;top:168px;width:1px;height:41px;background:#e8e8e8;"></div>
<div style="position:absolute;left:1507px;top:168px;width:1px;height:41px;background:#e8e8e8;"></div>
<div style="position:absolute;left:1632px;top:168px;width:1px;height:41px;background:#e8e8e8;"></div>
<div style="position:absolute;left:1758px;top:168px;width:1px;height:41px;background:#e8e8e8;"></div>
<div style="position:absolute;left:1883px;top:168px;width:1px;height:41px;background:#e8e8e8;"></div>
<div style="position:absolute;left:258px;top:180px;width:16px;height:16px;border:1px solid #d9d9d9;border-radius:2px;background:#fff;"></div>
<div style="position:absolute;left:303px;top:167px;width:63px;height:41px;display:flex;align-items:center;justify-content:center;white-space:nowrap;color:#595959;">5</div>
<div style="position:absolute;left:366px;top:167px;width:125px;height:41px;display:flex;align-items:center;justify-content:center;white-space:nowrap;color:#595959;">2024-10-26</div>
<div style="position:absolute;left:491px;top:167px;width:126px;height:41px;display:flex;align-items:center;justify-content:center;white-space:nowrap;color:#595959;">早餐</div>
<div style="position:absolute;left:617px;top:167px;width:125px;height:41px;display:flex;align-items:center;justify-content:center;white-space:nowrap;color:#595959;">干部餐</div>
<div style="position:absolute;left:742px;top:167px;width:125px;height:41px;display:flex;align-items:center;justify-content:center;white-space:nowrap;color:#595959;">000464</div>
<div style="position:absolute;left:867px;top:167px;width:126px;height:41px;display:flex;align-items:center;justify-content:center;white-space:nowrap;color:#595959;">黄志敏</div>
<div style="position:absolute;left:993px;top:167px;width:125px;height:41px;display:flex;align-items:center;justify-content:center;white-space:nowrap;color:#595959;">13412042793</div>
<div style="position:absolute;left:1118px;top:167px;width:188px;height:41px;display:flex;align-items:center;justify-content:center;white-space:nowrap;color:#595959;">2024-10-26 07:45:42</div>
<div style="position:absolute;left:1306px;top:167px;width:101px;height:41px;display:flex;align-items:center;justify-content:center;white-space:nowrap;color:#595959;">异常</div>
<div style="position:absolute;left:1407px;top:167px;width:100px;height:41px;display:flex;align-items:center;justify-content:center;white-space:nowrap;color:#595959;">用餐未订</div>
<div style="position:absolute;left:1507px;top:167px;width:125px;height:41px;display:flex;align-items:center;justify-content:center;white-space:nowrap;color:#595959;">1</div>
<div style="position:absolute;left:1632px;top:167px;width:126px;height:41px;display:flex;align-items:center;justify-content:center;white-space:nowrap;color:#595959;">4.00</div>
<div style="position:absolute;left:1758px;top:167px;width:125px;height:41px;display:flex;align-items:center;justify-content:center;white-space:nowrap;color:#595959;">工模三部</div>
<div style="position:absolute;left:228px;top:210px;width:1656px;height:42px;background:#fafafa;border-left:1px solid #e8e8e8;border-bottom:1px solid #e8e8e8;"></div>
<div style="position:absolute;left:303px;top:210px;width:1px;height:41px;background:#e8e8e8;"></div>
<div style="position:absolute;left:366px;top:210px;width:1px;height:41px;background:#e8e8e8;"></div>
<div style="position:absolute;left:491px;top:210px;width:1px;height:41px;background:#e8e8e8;"></div>
<div style="position:absolute;left:617px;top:210px;width:1px;height:41px;background:#e8e8e8;"></div>
<div style="position:absolute;left:742px;top:210px;width:1px;height:41px;background:#e8e8e8;"></div>
<div style="position:absolute;left:867px;top:210px;width:1px;height:41px;background:#e8e8e8;"></div>
<div style="position:absolute;left:993px;top:210px;width:1px;height:41px;background:#e8e8e8;"></div>
<div style="position:absolute;left:1118px;top:210px;width:1px;height:41px;background:#e8e8e8;"></div>
<div style="position:absolute;left:1306px;top:210px;width:1px;height:41px;background:#e8e8e8;"></div>
<div style="position:absolute;left:1407px;top:210px;width:1px;height:41px;background:#e8e8e8;"></div>
<div style="position:absolute;left:1507px;top:210px;width:1px;height:41px;background:#e8e8e8;"></div>
<div style="position:absolute;left:1632px;top:210px;width:1px;height:41px;background:#e8e8e8;"></div>
<div style="position:absolute;left:1758px;top:210px;width:1px;height:41px;background:#e8e8e8;"></div>
<div style="position:absolute;left:1883px;top:210px;width:1px;height:41px;background:#e8e8e8;"></div>
<div style="position:absolute;left:258px;top:222px;width:16px;height:16px;border:1px solid #d9d9d9;border-radius:2px;background:#fff;"></div>
<div style="position:absolute;left:303px;top:209px;width:63px;height:41px;display:flex;align-items:center;justify-content:center;white-space:nowrap;color:#595959;">6</div>
<div style="position:absolute;left:366px;top:209px;width:125px;height:41px;display:flex;align-items:center;justify-content:center;white-space:nowrap;color:#595959;">2024-10-26</div>
<div style="position:absolute;left:491px;top:209px;width:126px;height:41px;display:flex;align-items:center;justify-content:center;white-space:nowrap;color:#595959;">早餐</div>
<div style="position:absolute;left:617px;top:209px;width:125px;height:41px;display:flex;align-items:center;justify-content:center;white-space:nowrap;color:#595959;">干部餐</div>
<div style="position:absolute;left:742px;top:209px;width:125px;height:41px;display:flex;align-items:center;justify-content:center;white-space:nowrap;color:#595959;">000467</div>
<div style="position:absolute;left:867px;top:209px;width:126px;height:41px;display:flex;align-items:center;justify-content:center;white-space:nowrap;color:#595959;">黄锦</div>
<div style="position:absolute;left:993px;top:209px;width:125px;height:41px;display:flex;align-items:center;justify-content:center;white-space:nowrap;color:#595959;">13542313586</div>
<div style="position:absolute;left:1118px;top:209px;width:188px;height:41px;display:flex;align-items:center;justify-content:center;white-space:nowrap;color:#595959;">2024-10-26 07:45:24</div>
<div style="position:absolute;left:1306px;top:209px;width:101px;height:41px;display:flex;align-items:center;justify-content:center;white-space:nowrap;color:#595959;">异常</div>
<div style="position:absolute;left:1407px;top:209px;width:100px;height:41px;display:flex;align-items:center;justify-content:center;white-space:nowrap;color:#595959;">用餐未订</div>
<div style="position:absolute;left:1507px;top:209px;width:125px;height:41px;display:flex;align-items:center;justify-content:center;white-space:nowrap;color:#595959;">1</div>
<div style="position:absolute;left:1632px;top:209px;width:126px;height:41px;display:flex;align-items:center;justify-content:center;white-space:nowrap;color:#595959;">4.00</div>
<div style="position:absolute;left:1758px;top:209px;width:125px;height:41px;display:flex;align-items:center;justify-content:center;white-space:nowrap;color:#595959;">工模三部</div>
<div style="position:absolute;left:228px;top:252px;width:1656px;height:42px;background:#fff;border-left:1px solid #e8e8e8;border-bottom:1px solid #e8e8e8;"></div>
<div style="position:absolute;left:303px;top:252px;width:1px;height:41px;background:#e8e8e8;"></div>
<div style="position:absolute;left:366px;top:252px;width:1px;height:41px;background:#e8e8e8;"></div>
<div style="position:absolute;left:491px;top:252px;width:1px;height:41px;background:#e8e8e8;"></div>
<div style="position:absolute;left:617px;top:252px;width:1px;height:41px;background:#e8e8e8;"></div>
<div style="position:absolute;left:742px;top:252px;width:1px;height:41px;background:#e8e8e8;"></div>
<div style="position:absolute;left:867px;top:252px;width:1px;height:41px;background:#e8e8e8;"></div>
<div style="position:absolute;left:993px;top:252px;width:1px;height:41px;background:#e8e8e8;"></div>
<div style="position:absolute;left:1118px;top:252px;width:1px;height:41px;background:#e8e8e8;"></div>
<div style="position:absolute;left:1306px;top:252px;width:1px;height:41px;background:#e8e8e8;"></div>
<div style="position:absolute;left:1407px;top:252px;width:1px;height:41px;background:#e8e8e8;"></div>
<div style="position:absolute;left:1507px;top:252px;width:1px;height:41px;background:#e8e8e8;"></div>
<div style="position:absolute;left:1632px;top:252px;width:1px;height:41px;background:#e8e8e8;"></div>
<div style="position:absolute;left:1758px;top:252px;width:1px;height:41px;background:#e8e8e8;"></div>
<div style="position:absolute;left:1883px;top:252px;width:1px;height:41px;background:#e8e8e8;"></div>
<div style="position:absolute;left:258px;top:264px;width:16px;height:16px;border:1px solid #d9d9d9;border-radius:2px;background:#fff;"></div>
<div style="position:absolute;left:303px;top:251px;width:63px;height:41px;display:flex;align-items:center;justify-content:center;white-space:nowrap;color:#595959;">7</div>
<div style="position:absolute;left:366px;top:251px;width:125px;height:41px;display:flex;align-items:center;justify-content:center;white-space:nowrap;color:#595959;">2024-10-26</div>
<div style="position:absolute;left:491px;top:251px;width:126px;height:41px;display:flex;align-items:center;justify-content:center;white-space:nowrap;color:#595959;">早餐</div>
<div style="position:absolute;left:617px;top:251px;width:125px;height:41px;display:flex;align-items:center;justify-content:center;white-space:nowrap;color:#595959;">干部餐</div>
<div style="position:absolute;left:742px;top:251px;width:125px;height:41px;display:flex;align-items:center;justify-content:center;white-space:nowrap;color:#595959;">000452</div>
<div style="position:absolute;left:867px;top:251px;width:126px;height:41px;display:flex;align-items:center;justify-content:center;white-space:nowrap;color:#595959;">莫国祥</div>
<div style="position:absolute;left:993px;top:251px;width:125px;height:41px;display:flex;align-items:center;justify-content:center;white-space:nowrap;color:#595959;">15916883654</div>
<div style="position:absolute;left:1118px;top:251px;width:188px;height:41px;display:flex;align-items:center;justify-content:center;white-space:nowrap;color:#595959;">2024-10-26 07:44:46</div>
<div style="position:absolute;left:1306px;top:251px;width:101px;height:41px;display:flex;align-items:center;justify-content:center;white-space:nowrap;color:#595959;">异常</div>
<div style="position:absolute;left:1407px;top:251px;width:100px;height:41px;display:flex;align-items:center;justify-content:center;white-space:nowrap;color:#595959;">用餐未订</div>
<div style="position:absolute;left:1507px;top:251px;width:125px;height:41px;display:flex;align-items:center;justify-content:center;white-space:nowrap;color:#595959;">1</div>
<div style="position:absolute;left:1632px;top:251px;width:126px;height:41px;display:flex;align-items:center;justify-content:center;white-space:nowrap;color:#595959;">4.00</div>
<div style="position:absolute;left:1758px;top:251px;width:125px;height:41px;display:flex;align-items:center;justify-content:center;white-space:nowrap;color:#595959;">工模二部</div>
<div style="position:absolute;left:228px;top:294px;width:1656px;height:42px;background:#fafafa;border-left:1px solid #e8e8e8;border-bottom:1px solid #e8e8e8;"></div>
<div style="position:absolute;left:303px;top:294px;width:1px;height:41px;background:#e8e8e8;"></div>
<div style="position:absolute;left:366px;top:294px;width:1px;height:41px;background:#e8e8e8;"></div>
<div style="position:absolute;left:491px;top:294px;width:1px;height:41px;background:#e8e8e8;"></div>
<div style="position:absolute;left:617px;top:294px;width:1px;height:41px;background:#e8e8e8;"></div>
<div style="position:absolute;left:742px;top:294px;width:1px;height:41px;background:#e8e8e8;"></div>
<div style="position:absolute;left:867px;top:294px;width:1px;height:41px;background:#e8e8e8;"></div>
<div style="position:absolute;left:993px;top:294px;width:1px;height:41px;background:#e8e8e8;"></div>
<div style="position:absolute;left:1118px;top:294px;width:1px;height:41px;background:#e8e8e8;"></div>
<div style="position:absolute;left:1306px;top:294px;width:1px;height:41px;background:#e8e8e8;"></div>
<div style="position:absolute;left:1407px;top:294px;width:1px;height:41px;background:#e8e8e8;"></div>
<div style="position:absolute;left:1507px;top:294px;width:1px;height:41px;background:#e8e8e8;"></div>
<div style="position:absolute;left:1632px;top:294px;width:1px;height:41px;background:#e8e8e8;"></div>
<div style="position:absolute;left:1758px;top:294px;width:1px;height:41px;background:#e8e8e8;"></div>
<div style="position:absolute;left:1883px;top:294px;width:1px;height:41px;background:#e8e8e8;"></div>
<div style="position:absolute;left:258px;top:306px;width:16px;height:16px;border:1px solid #d9d9d9;border-radius:2px;background:#fff;"></div>
<div style="position:absolute;left:303px;top:293px;width:63px;height:41px;display:flex;align-items:center;justify-content:center;white-space:nowrap;color:#595959;">8</div>
<div style="position:absolute;left:366px;top:293px;width:125px;height:41px;display:flex;align-items:center;justify-content:center;white-space:nowrap;color:#595959;">2024-10-26</div>
<div style="position:absolute;left:491px;top:293px;width:126px;height:41px;display:flex;align-items:center;justify-content:center;white-space:nowrap;color:#595959;">早餐</div>
<div style="position:absolute;left:617px;top:293px;width:125px;height:41px;display:flex;align-items:center;justify-content:center;white-space:nowrap;color:#595959;">干部餐</div>
<div style="position:absolute;left:742px;top:293px;width:125px;height:41px;display:flex;align-items:center;justify-content:center;white-space:nowrap;color:#595959;">001730</div>
<div style="position:absolute;left:867px;top:293px;width:126px;height:41px;display:flex;align-items:center;justify-content:center;white-space:nowrap;color:#595959;">李华航</div>
<div style="position:absolute;left:993px;top:293px;width:125px;height:41px;display:flex;align-items:center;justify-content:center;white-space:nowrap;color:#595959;">17206656178</div>
<div style="position:absolute;left:1118px;top:293px;width:188px;height:41px;display:flex;align-items:center;justify-content:center;white-space:nowrap;color:#595959;">2024-10-26 07:44:42</div>
<div style="position:absolute;left:1306px;top:293px;width:101px;height:41px;display:flex;align-items:center;justify-content:center;white-space:nowrap;color:#595959;">异常</div>
<div style="position:absolute;left:1407px;top:293px;width:100px;height:41px;display:flex;align-items:center;justify-content:center;white-space:nowrap;color:#595959;">用餐未订</div>
<div style="position:absolute;left:1507px;top:293px;width:125px;height:41px;display:flex;align-items:center;justify-content:center;white-space:nowrap;color:#595959;">1</div>
<div style="position:absolute;left:1632px;top:293px;width:126px;height:41px;display:flex;align-items:center;justify-content:center;white-space:nowrap;color:#595959;">4.00</div>
<div style="position:absolute;left:1758px;top:293px;width:125px;height:41px;display:flex;align-items:center;justify-content:center;white-space:nowrap;color:#595959;">模型铸造部</div>
<div style="position:absolute;left:228px;top:336px;width:1656px;height:42px;background:#fff;border-left:1px solid #e8e8e8;border-bottom:1px solid #e8e8e8;"></div>
<div style="position:absolute;left:303px;top:336px;width:1px;height:41px;background:#e8e8e8;"></div>
<div style="position:absolute;left:366px;top:336px;width:1px;height:41px;background:#e8e8e8;"></div>
<div style="position:absolute;left:491px;top:336px;width:1px;height:41px;background:#e8e8e8;"></div>
<div style="position:absolute;left:617px;top:336px;width:1px;height:41px;background:#e8e8e8;"></div>
<div style="position:absolute;left:742px;top:336px;width:1px;height:41px;background:#e8e8e8;"></div>
<div style="position:absolute;left:867px;top:336px;width:1px;height:41px;background:#e8e8e8;"></div>
<div style="position:absolute;left:993px;top:336px;width:1px;height:41px;background:#e8e8e8;"></div>
<div style="position:absolute;left:1118px;top:336px;width:1px;height:41px;background:#e8e8e8;"></div>
<div style="position:absolute;left:1306px;top:336px;width:1px;height:41px;background:#e8e8e8;"></div>
<div style="position:absolute;left:1407px;top:336px;width:1px;height:41px;background:#e8e8e8;"></div>
<div style="position:absolute;left:1507px;top:336px;width:1px;height:41px;background:#e8e8e8;"></div>
<div style="position:absolute;left:1632px;top:336px;width:1px;height:41px;background:#e8e8e8;"></div>
<div style="position:absolute;left:1758px;top:336px;width:1px;height:41px;background:#e8e8e8;"></div>
<div style="position:absolute;left:1883px;top:336px;width:1px;height:41px;background:#e8e8e8;"></div>
<div style="position:absolute;left:258px;top:348px;width:16px;height:16px;border:1px solid #d9d9d9;border-radius:2px;background:#fff;"></div>
<div style="position:absolute;left:303px;top:335px;width:63px;height:41px;display:flex;align-items:center;justify-content:center;white-space:nowrap;color:#595959;">9</div>
<div style="position:absolute;left:366px;top:335px;width:125px;height:41px;display:flex;align-items:center;justify-content:center;white-space:nowrap;color:#595959;">2024-10-26</div>
<div style="position:absolute;left:491px;top:335px;width:126px;height:41px;display:flex;align-items:center;justify-content:center;white-space:nowrap;color:#595959;">早餐</div>
<div style="position:absolute;left:617px;top:335px;width:125px;height:41px;display:flex;align-items:center;justify-content:center;white-space:nowrap;color:#595959;">干部餐</div>
<div style="position:absolute;left:742px;top:335px;width:125px;height:41px;display:flex;align-items:center;justify-content:center;white-space:nowrap;color:#595959;">000457</div>
<div style="position:absolute;left:867px;top:335px;width:126px;height:41px;display:flex;align-items:center;justify-content:center;white-space:nowrap;color:#595959;">汪泽伦</div>
<div style="position:absolute;left:993px;top:335px;width:125px;height:41px;display:flex;align-items:center;justify-content:center;white-space:nowrap;color:#595959;">18680518233</div>
<div style="position:absolute;left:1118px;top:335px;width:188px;height:41px;display:flex;align-items:center;justify-content:center;white-space:nowrap;color:#595959;">2024-10-26 07:43:52</div>
<div style="position:absolute;left:1306px;top:335px;width:101px;height:41px;display:flex;align-items:center;justify-content:center;white-space:nowrap;color:#595959;">异常</div>
<div style="position:absolute;left:1407px;top:335px;width:100px;height:41px;display:flex;align-items:center;justify-content:center;white-space:nowrap;color:#595959;">用餐未订</div>
<div style="position:absolute;left:1507px;top:335px;width:125px;height:41px;display:flex;align-items:center;justify-content:center;white-space:nowrap;color:#595959;">1</div>
<div style="position:absolute;left:1632px;top:335px;width:126px;height:41px;display:flex;align-items:center;justify-content:center;white-space:nowrap;color:#595959;">4.00</div>
<div style="position:absolute;left:1758px;top:335px;width:125px;height:41px;display:flex;align-items:center;justify-content:center;white-space:nowrap;color:#595959;">工模二部</div>
<div style="position:absolute;left:228px;top:378px;width:1656px;height:42px;background:#fafafa;border-left:1px solid #e8e8e8;border-bottom:1px solid #e8e8e8;"></div>
<div style="position:absolute;left:303px;top:378px;width:1px;height:41px;background:#e8e8e8;"></div>
<div style="position:absolute;left:366px;top:378px;width:1px;height:41px;background:#e8e8e8;"></div>
<div style="position:absolute;left:491px;top:378px;width:1px;height:41px;background:#e8e8e8;"></div>
<div style="position:absolute;left:617px;top:378px;width:1px;height:41px;background:#e8e8e8;"></div>
<div style="position:absolute;left:742px;top:378px;width:1px;height:41px;background:#e8e8e8;"></div>
<div style="position:absolute;left:867px;top:378px;width:1px;height:41px;background:#e8e8e8;"></div>
<div style="position:absolute;left:993px;top:378px;width:1px;height:41px;background:#e8e8e8;"></div>
<div style="position:absolute;left:1118px;top:378px;width:1px;height:41px;background:#e8e8e8;"></div>
<div style="position:absolute;left:1306px;top:378px;width:1px;height:41px;background:#e8e8e8;"></div>
<div style="position:absolute;left:1407px;top:378px;width:1px;height:41px;background:#e8e8e8;"></div>
<div style="position:absolute;left:1507px;top:378px;width:1px;height:41px;background:#e8e8e8;"></div>
<div style="position:absolute;left:1632px;top:378px;width:1px;height:41px;background:#e8e8e8;"></div>
<div style="position:absolute;left:1758px;top:378px;width:1px;height:41px;background:#e8e8e8;"></div>
<div style="position:absolute;left:1883px;top:378px;width:1px;height:41px;background:#e8e8e8;"></div>
<div style="position:absolute;left:258px;top:390px;width:16px;height:16px;border:1px solid #d9d9d9;border-radius:2px;background:#fff;"></div>
<div style="position:absolute;left:303px;top:377px;width:63px;height:41px;display:flex;align-items:center;justify-content:center;white-space:nowrap;color:#595959;">10</div>
<div style="position:absolute;left:366px;top:377px;width:125px;height:41px;display:flex;align-items:center;justify-content:center;white-space:nowrap;color:#595959;">2024-10-26</div>
<div style="position:absolute;left:491px;top:377px;width:126px;height:41px;display:flex;align-items:center;justify-content:center;white-space:nowrap;color:#595959;">早餐</div>
<div style="position:absolute;left:617px;top:377px;width:125px;height:41px;display:flex;align-items:center;justify-content:center;white-space:nowrap;color:#595959;">干部餐</div>
<div style="position:absolute;left:742px;top:377px;width:125px;height:41px;display:flex;align-items:center;justify-content:center;white-space:nowrap;color:#595959;">001037</div>
<div style="position:absolute;left:867px;top:377px;width:126px;height:41px;display:flex;align-items:center;justify-content:center;white-space:nowrap;color:#595959;">卢珊</div>
<div style="position:absolute;left:993px;top:377px;width:125px;height:41px;display:flex;align-items:center;justify-content:center;white-space:nowrap;color:#595959;">13268580517</div>
<div style="position:absolute;left:1118px;top:377px;width:188px;height:41px;display:flex;align-items:center;justify-content:center;white-space:nowrap;color:#595959;">2024-10-26 07:38:43</div>
<div style="position:absolute;left:1306px;top:377px;width:101px;height:41px;display:flex;align-items:center;justify-content:center;white-space:nowrap;color:#595959;">异常</div>
<div style="position:absolute;left:1407px;top:377px;width:100px;height:41px;display:flex;align-items:center;justify-content:center;white-space:nowrap;color:#595959;">用餐未订</div>
<div style="position:absolute;left:1507px;top:377px;width:125px;height:41px;display:flex;align-items:center;justify-content:center;white-space:nowrap;color:#595959;">1</div>
<div style="position:absolute;left:1632px;top:377px;width:126px;height:41px;display:flex;align-items:center;justify-content:center;white-space:nowrap;color:#595959;">4.00</div>
<div style="position:absolute;left:1758px;top:377px;width:125px;height:41px;display:flex;align-items:center;justify-content:center;white-space:nowrap;color:#595959;">工模一部</div>
<div style="position:absolute;left:228px;top:420px;width:1656px;height:42px;background:#fff;border-left:1px solid #e8e8e8;border-bottom:1px solid #e8e8e8;"></div>
<div style="position:absolute;left:303px;top:420px;width:1px;height:41px;background:#e8e8e8;"></div>
<div style="position:absolute;left:366px;top:420px;width:1px;height:41px;background:#e8e8e8;"></div>
<div style="position:absolute;left:491px;top:420px;width:1px;height:41px;background:#e8e8e8;"></div>
<div style="position:absolute;left:617px;top:420px;width:1px;height:41px;background:#e8e8e8;"></div>
<div style="position:absolute;left:742px;top:420px;width:1px;height:41px;background:#e8e8e8;"></div>
<div style="position:absolute;left:867px;top:420px;width:1px;height:41px;background:#e8e8e8;"></div>
<div style="position:absolute;left:993px;top:420px;width:1px;height:41px;background:#e8e8e8;"></div>
<div style="position:absolute;left:1118px;top:420px;width:1px;height:41px;background:#e8e8e8;"></div>
<div style="position:absolute;left:1306px;top:420px;width:1px;height:41px;background:#e8e8e8;"></div>
<div style="position:absolute;left:1407px;top:420px;width:1px;height:41px;background:#e8e8e8;"></div>
<div style="position:absolute;left:1507px;top:420px;width:1px;height:41px;background:#e8e8e8;"></div>
<div style="position:absolute;left:1632px;top:420px;width:1px;height:41px;background:#e8e8e8;"></div>
<div style="position:absolute;left:1758px;top:420px;width:1px;height:41px;background:#e8e8e8;"></div>
<div style="position:absolute;left:1883px;top:420px;width:1px;height:41px;background:#e8e8e8;"></div>
<div style="position:absolute;left:258px;top:432px;width:16px;height:16px;border:1px solid #d9d9d9;border-radius:2px;background:#fff;"></div>
<div style="position:absolute;left:303px;top:419px;width:63px;height:41px;display:flex;align-items:center;justify-content:center;white-space:nowrap;color:#595959;">11</div>
<div style="position:absolute;left:366px;top:419px;width:125px;height:41px;display:flex;align-items:center;justify-content:center;white-space:nowrap;color:#595959;">2024-10-26</div>
<div style="position:absolute;left:491px;top:419px;width:126px;height:41px;display:flex;align-items:center;justify-content:center;white-space:nowrap;color:#595959;">早餐</div>
<div style="position:absolute;left:617px;top:419px;width:125px;height:41px;display:flex;align-items:center;justify-content:center;white-space:nowrap;color:#595959;">干部餐</div>
<div style="position:absolute;left:742px;top:419px;width:125px;height:41px;display:flex;align-items:center;justify-content:center;white-space:nowrap;color:#595959;">000446</div>
<div style="position:absolute;left:867px;top:419px;width:126px;height:41px;display:flex;align-items:center;justify-content:center;white-space:nowrap;color:#595959;">蒋飞鹏</div>
<div style="position:absolute;left:993px;top:419px;width:125px;height:41px;display:flex;align-items:center;justify-content:center;white-space:nowrap;color:#595959;">13113234896</div>
<div style="position:absolute;left:1118px;top:419px;width:188px;height:41px;display:flex;align-items:center;justify-content:center;white-space:nowrap;color:#595959;">2024-10-26 07:35:41</div>
<div style="position:absolute;left:1306px;top:419px;width:101px;height:41px;display:flex;align-items:center;justify-content:center;white-space:nowrap;color:#595959;">异常</div>
<div style="position:absolute;left:1407px;top:419px;width:100px;height:41px;display:flex;align-items:center;justify-content:center;white-space:nowrap;color:#595959;">用餐未订</div>
<div style="position:absolute;left:1507px;top:419px;width:125px;height:41px;display:flex;align-items:center;justify-content:center;white-space:nowrap;color:#595959;">1</div>
<div style="position:absolute;left:1632px;top:419px;width:126px;height:41px;display:flex;align-items:center;justify-content:center;white-space:nowrap;color:#595959;">4.00</div>
<div style="position:absolute;left:1758px;top:419px;width:125px;height:41px;display:flex;align-items:center;justify-content:center;white-space:nowrap;color:#595959;">模型铸造部</div>
<div style="position:absolute;left:228px;top:462px;width:1656px;height:42px;background:#fafafa;border-left:1px solid #e8e8e8;border-bottom:1px solid #e8e8e8;"></div>
<div style="position:absolute;left:303px;top:462px;width:1px;height:41px;background:#e8e8e8;"></div>
<div style="position:absolute;left:366px;top:462px;width:1px;height:41px;background:#e8e8e8;"></div>
<div style="position:absolute;left:491px;top:462px;width:1px;height:41px;background:#e8e8e8;"></div>
<div style="position:absolute;left:617px;top:462px;width:1px;height:41px;background:#e8e8e8;"></div>
<div style="position:absolute;left:742px;top:462px;width:1px;height:41px;background:#e8e8e8;"></div>
<div style="position:absolute;left:867px;top:462px;width:1px;height:41px;background:#e8e8e8;"></div>
<div style="position:absolute;left:993px;top:462px;width:1px;height:41px;background:#e8e8e8;"></div>
<div style="position:absolute;left:1118px;top:462px;width:1px;height:41px;background:#e8e8e8;"></div>
<div style="position:absolute;left:1306px;top:462px;width:1px;height:41px;background:#e8e8e8;"></div>
<div style="position:absolute;left:1407px;top:462px;width:1px;height:41px;background:#e8e8e8;"></div>
<div style="position:absolute;left:1507px;top:462px;width:1px;height:41px;background:#e8e8e8;"></div>
<div style="position:absolute;left:1632px;top:462px;width:1px;height:41px;background:#e8e8e8;"></div>
<div style="position:absolute;left:1758px;top:462px;width:1px;height:41px;background:#e8e8e8;"></div>
<div style="position:absolute;left:1883px;top:462px;width:1px;height:41px;background:#e8e8e8;"></div>
<div style="position:absolute;left:258px;top:474px;width:16px;height:16px;border:1px solid #d9d9d9;border-radius:2px;background:#fff;"></div>
<div style="position:absolute;left:303px;top:461px;width:63px;height:41px;display:flex;align-items:center;justify-content:center;white-space:nowrap;color:#595959;">12</div>
<div style="position:absolute;left:366px;top:461px;width:125px;height:41px;display:flex;align-items:center;justify-content:center;white-space:nowrap;color:#595959;">2024-10-26</div>
<div style="position:absolute;left:491px;top:461px;width:126px;height:41px;display:flex;align-items:center;justify-content:center;white-space:nowrap;color:#595959;">早餐</div>
<div style="position:absolute;left:617px;top:461px;width:125px;height:41px;display:flex;align-items:center;justify-content:center;white-space:nowrap;color:#595959;">干部餐</div>
<div style="position:absolute;left:742px;top:461px;width:125px;height:41px;display:flex;align-items:center;justify-content:center;white-space:nowrap;color:#595959;">000411</div>
<div style="position:absolute;left:867px;top:461px;width:126px;height:41px;display:flex;align-items:center;justify-content:center;white-space:nowrap;color:#595959;">罗维彬</div>
<div style="position:absolute;left:993px;top:461px;width:125px;height:41px;display:flex;align-items:center;justify-content:center;white-space:nowrap;color:#595959;">13537291558</div>
<div style="position:absolute;left:1118px;top:461px;width:188px;height:41px;display:flex;align-items:center;justify-content:center;white-space:nowrap;color:#595959;">2024-10-26 07:34:54</div>
<div style="position:absolute;left:1306px;top:461px;width:101px;height:41px;display:flex;align-items:center;justify-content:center;white-space:nowrap;color:#595959;">异常</div>
<div style="position:absolute;left:1407px;top:461px;width:100px;height:41px;display:flex;align-items:center;justify-content:center;white-space:nowrap;color:#595959;">用餐未订</div>
<div style="position:absolute;left:1507px;top:461px;width:125px;height:41px;display:flex;align-items:center;justify-content:center;white-space:nowrap;color:#595959;">1</div>
<div style="position:absolute;left:1632px;top:461px;width:126px;height:41px;display:flex;align-items:center;justify-content:center;white-space:nowrap;color:#595959;">4.00</div>
<div style="position:absolute;left:1758px;top:461px;width:125px;height:41px;display:flex;align-items:center;justify-content:center;white-space:nowrap;color:#595959;">品质部</div>
<div style="position:absolute;left:1884px;top:0px;width:8px;height:492px;background:#f4f4f4;"></div>
<div style="position:absolute;left:1884px;top:0px;width:8px;height:115px;background:#cccccc;border-radius:3px;"></div>
</div>
<div style="position:absolute;left:228px;top:811px;width:1664px;height:9px;background:#f5f5f5;"></div>
<div style="position:absolute;left:229px;top:820px;width:1662px;height:43px;background:#fafafa;border:1px solid #e8e8e8;border-radius:0 0 4px 4px;box-shadow:0 1px 2px rgba(0,0,0,0.06);"></div>
<div style="position:absolute;left:305px;top:821px;width:1px;height:41px;background:#e8e8e8;"></div>
<div style="position:absolute;left:367px;top:821px;width:1px;height:41px;background:#e8e8e8;"></div>
<div style="position:absolute;left:493px;top:821px;width:1px;height:41px;background:#e8e8e8;"></div>
<div style="position:absolute;left:619px;top:821px;width:1px;height:41px;background:#e8e8e8;"></div>
<div style="position:absolute;left:745px;top:821px;width:1px;height:41px;background:#e8e8e8;"></div>
<div style="position:absolute;left:871px;top:821px;width:1px;height:41px;background:#e8e8e8;"></div>
<div style="position:absolute;left:997px;top:821px;width:1px;height:41px;background:#e8e8e8;"></div>
<div style="position:absolute;left:1122px;top:821px;width:1px;height:41px;background:#e8e8e8;"></div>
<div style="position:absolute;left:1311px;top:821px;width:1px;height:41px;background:#e8e8e8;"></div>
<div style="position:absolute;left:1412px;top:821px;width:1px;height:41px;background:#e8e8e8;"></div>
<div style="position:absolute;left:1512px;top:821px;width:1px;height:41px;background:#e8e8e8;"></div>
<div style="position:absolute;left:1638px;top:821px;width:1px;height:41px;background:#e8e8e8;"></div>
<div style="position:absolute;left:1764px;top:821px;width:1px;height:41px;background:#e8e8e8;"></div>
<div style="position:absolute;left:259px;top:833px;width:16px;height:16px;border:1px solid #d9d9d9;border-radius:2px;background:#fff;"></div>
<div style="position:absolute;left:305px;top:820px;width:62px;height:41px;display:flex;align-items:center;justify-content:center;white-space:nowrap;color:#f00;font-weight:bold;">合计</div>
<div style="position:absolute;left:1512px;top:820px;width:126px;height:41px;display:flex;align-items:center;justify-content:center;white-space:nowrap;color:#f00;font-weight:bold;">67164</div>
<div style="position:absolute;left:1638px;top:820px;width:126px;height:41px;display:flex;align-items:center;justify-content:center;white-space:nowrap;color:#f00;font-weight:bold;">509868.00</div>
<div style="position:absolute;left:1311px;top:880px;width:140px;height:24px;display:flex;align-items:center;justify-content:flex-start;white-space:nowrap;color:#595959;">总数据量为 67123 条</div>
<svg style="position:absolute;left:1458px;top:886px;" width="8" height="12" viewBox="0 0 8 12"><path d="M6.5 1 L1.5 6 L6.5 11" stroke="#bfbfbf" stroke-width="1.2" fill="none"/></svg>
<div style="position:absolute;left:1474px;top:880px;width:24px;height:24px;border:1px solid #1890ff;border-radius:4px;"></div>
<div style="position:absolute;left:1474px;top:880px;width:24px;height:24px;display:flex;align-items:center;justify-content:center;white-space:nowrap;color:#1890ff;">1</div>
<div style="position:absolute;left:1498px;top:880px;width:24px;height:24px;display:flex;align-items:center;justify-content:center;white-space:nowrap;color:#595959;">2</div>
<div style="position:absolute;left:1522px;top:880px;width:24px;height:24px;display:flex;align-items:center;justify-content:center;white-space:nowrap;color:#595959;">3</div>
<div style="position:absolute;left:1546px;top:880px;width:24px;height:24px;display:flex;align-items:center;justify-content:center;white-space:nowrap;color:#595959;">4</div>
<div style="position:absolute;left:1570px;top:880px;width:24px;height:24px;display:flex;align-items:center;justify-content:center;white-space:nowrap;color:#595959;">5</div>
<svg style="position:absolute;left:1601px;top:890px;" width="19" height="4" viewBox="0 0 19 4"><circle cx="2.0" cy="2" r="1.6" fill="#bfbfbf"/><circle cx="9.3" cy="2" r="1.6" fill="#bfbfbf"/><circle cx="16.6" cy="2" r="1.6" fill="#bfbfbf"/></svg>
<div style="position:absolute;left:1630px;top:880px;width:38px;height:24px;display:flex;align-items:center;justify-content:center;white-space:nowrap;color:#595959;">1343</div>
<svg style="position:absolute;left:1680px;top:886px;" width="8" height="12" viewBox="0 0 8 12"><path d="M1.5 1 L6.5 6 L1.5 11" stroke="#595959" stroke-width="1.2" fill="none"/></svg>
<div style="position:absolute;left:1698px;top:880px;width:84px;height:24px;border:1px solid #d9d9d9;border-radius:4px;"></div>
<div style="position:absolute;left:1706px;top:880px;width:60px;height:24px;display:flex;align-items:center;justify-content:flex-start;white-space:nowrap;color:#595959;">50 条/页</div>
<svg style="position:absolute;left:1763px;top:887px;" width="10" height="9" viewBox="0 0 10 9"><path d="M1 1 L5 6.8 L9 1" stroke="#bfbfbf" stroke-width="1" fill="none"/></svg>
<div style="position:absolute;left:1790px;top:880px;width:30px;height:24px;display:flex;align-items:center;justify-content:flex-start;white-space:nowrap;color:#595959;">跳至</div>
<div style="position:absolute;left:1826px;top:880px;width:44px;height:24px;border:1px solid #d9d9d9;border-radius:4px;"></div>
<div style="position:absolute;left:1878px;top:880px;width:20px;height:24px;display:flex;align-items:center;justify-content:flex-start;white-space:nowrap;color:#595959;">页</div>
</body></html>
